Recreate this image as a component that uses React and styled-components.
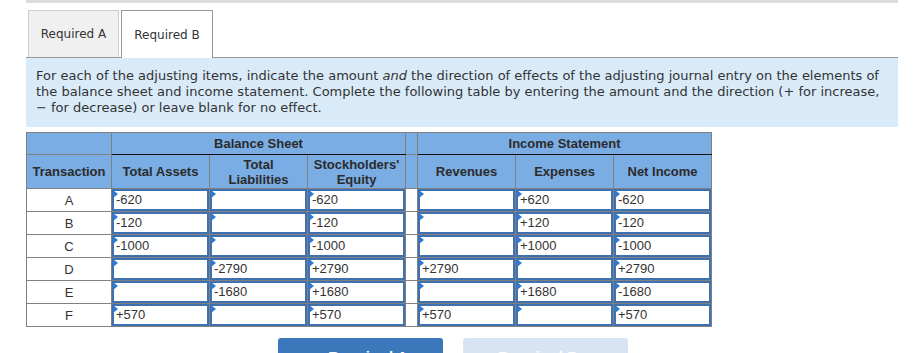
import React from 'react';
import styled, { createGlobalStyle } from 'styled-components';

const GlobalStyle = createGlobalStyle`
  body {
    margin: 0;
    background: #ffffff;
    font-family: "DejaVu Sans", Verdana, sans-serif;
    color: #333333;
  }
`;

const Page = styled.div`
  width: 872px;
  margin-left: 26px;
`;

const TopBar = styled.div`
  height: 3px;
  background: #dddddd;
`;

const TabRow = styled.div`
  display: flex;
  align-items: flex-end;
  padding-top: 7px;
  padding-left: 2px;
  gap: 2px;
  border-bottom: 1px solid #999999;
`;

const Tab = styled.div`
  width: ${(p) => (p.active ? '92px' : '91px')};
  height: ${(p) => (p.active ? '48px' : '47px')};
  display: flex;
  align-items: center;
  justify-content: center;
  font-size: 12px;
  color: #333333;
  box-sizing: border-box;
  border: 1px solid ${(p) => (p.active ? '#999999' : '#cccccc')};
  border-bottom: none;
  background: ${(p) => (p.active ? '#ffffff' : '#f0f0f0')};
  margin-bottom: ${(p) => (p.active ? '-1px' : '0')};
`;

const Info = styled.div`
  background: #d9ebf9;
  padding: 10px 10px 11px 10px;
  font-size: 13px;
  line-height: 16px;
  color: #333333;
`;

const Table = styled.table`
  margin-top: 5px;
  border-collapse: collapse;
  font-family: "Liberation Sans", Arial, sans-serif;
  table-layout: fixed;
  width: 685px;
`;

const HeadRow = styled.tr`
  height: ${(p) => p.h}px;
`;

const Head = styled.th`
  background: #7aade3;
  color: #2b2b2b;
  font-size: 13px;
  font-weight: bold;
  line-height: 15px;
  border: 1px solid #808080;
  border-bottom: 1px solid ${(p) => (p.group ? '#111111' : '#808080')};
  padding: 0 2px;
  text-align: center;
  vertical-align: middle;
`;

const BodyRow = styled.tr`
  height: 23px;
`;

const LetterCell = styled.td`
  border: 1px solid #808080;
  text-align: center;
  font-size: 13px;
  color: #333333;
  padding: 0;
`;

const Spacer = styled.td`
  border: 1px solid #808080;
  background: #ffffff;
  padding: 0;
`;

const InputCell = styled.td`
  border: 1px solid #808080;
  padding: 0;
`;

const Field = styled.div`
  position: relative;
  box-sizing: border-box;
  height: 22px;
  border: 2px solid #3f70b0;
  font-size: 13px;
  line-height: 18px;
  color: #333333;
  padding-left: 2px;
  background: #ffffff;

  &::before {
    content: '';
    position: absolute;
    left: -1px;
    top: -1px;
    border-top: 4px solid transparent;
    border-bottom: 4px solid transparent;
    border-left: 5px solid #2f7ad0;
  }
`;

const ButtonRow = styled.div`
  display: flex;
  gap: 20px;
  padding-left: 252px;
  margin-top: 11px;
`;

const NavButton = styled.div`
  width: 165px;
  height: 36px;
  border-radius: 3px;
  background: ${(p) => (p.disabled ? '#d8e4f1' : '#3a77bb')};
  color: #ffffff;
  font-family: "Liberation Sans", Arial, sans-serif;
  font-size: 15px;
  font-weight: bold;
  display: flex;
  align-items: center;
  justify-content: center;
  gap: 10px;
`;

const rows = [
  ['A', '-620', '', '-620', '', '+620', '-620'],
  ['B', '-120', '', '-120', '', '+120', '-120'],
  ['C', '-1000', '', '-1000', '', '+1000', '-1000'],
  ['D', '', '-2790', '+2790', '+2790', '', '+2790'],
  ['E', '', '-1680', '+1680', '', '+1680', '-1680'],
  ['F', '+570', '', '+570', '+570', '', '+570'],
];

export default function App() {
  return (
    <>
      <GlobalStyle />
      <Page>
        <TopBar />
        <TabRow>
          <Tab>Required A</Tab>
          <Tab active>Required B</Tab>
        </TabRow>
        <Info>
          For each of the adjusting items, indicate the amount <em>and</em> the direction of effects of the adjusting journal entry on the elements of the balance sheet and income statement. Complete the following table by entering the amount and the direction (+ for increase, − for decrease) or leave blank for no effect.
        </Info>
        <Table>
          <colgroup>
            <col style={{ width: 85 }} />
            <col style={{ width: 98 }} />
            <col style={{ width: 98 }} />
            <col style={{ width: 98 }} />
            <col style={{ width: 12 }} />
            <col style={{ width: 98 }} />
            <col style={{ width: 98 }} />
            <col style={{ width: 98 }} />
          </colgroup>
          <thead>
            <HeadRow h={22}>
              <Head />
              <Head group colSpan={3}>Balance Sheet</Head>
              <Head />
              <Head group colSpan={3}>Income Statement</Head>
            </HeadRow>
            <HeadRow h={34}>
              <Head>Transaction</Head>
              <Head>Total Assets</Head>
              <Head>Total<br />Liabilities</Head>
              <Head>Stockholders'<br />Equity</Head>
              <Head />
              <Head>Revenues</Head>
              <Head>Expenses</Head>
              <Head>Net Income</Head>
            </HeadRow>
          </thead>
          <tbody>
            {rows.map(([letter, ta, tl, se, rev, exp, ni]) => (
              <BodyRow key={letter}>
                <LetterCell>{letter}</LetterCell>
                <InputCell><Field>{ta}</Field></InputCell>
                <InputCell><Field>{tl}</Field></InputCell>
                <InputCell><Field>{se}</Field></InputCell>
                <Spacer />
                <InputCell><Field>{rev}</Field></InputCell>
                <InputCell><Field>{exp}</Field></InputCell>
                <InputCell><Field>{ni}</Field></InputCell>
              </BodyRow>
            ))}
          </tbody>
        </Table>
        <ButtonRow>
          <NavButton><span>‹</span><span>Required A</span></NavButton>
          <NavButton disabled><span>Required B</span><span>›</span></NavButton>
        </ButtonRow>
      </Page>
    </>
  );
}
